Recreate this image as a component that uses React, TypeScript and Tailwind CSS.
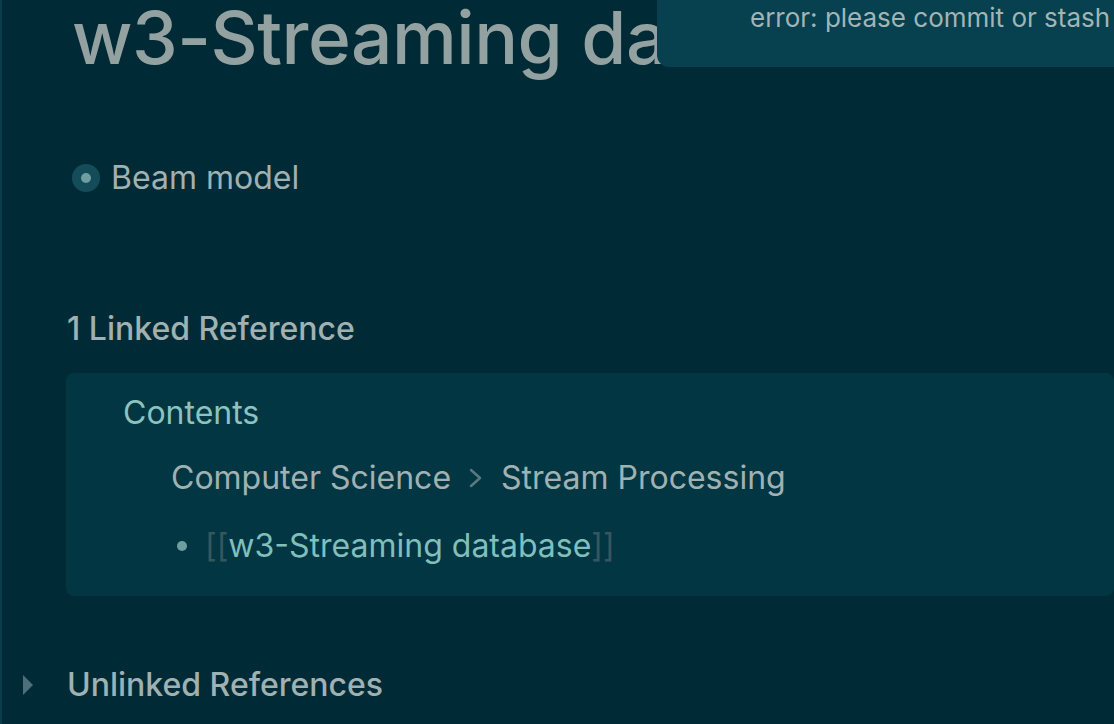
export default function App() {
  return (
    <div className="relative h-[724px] w-full overflow-hidden bg-[#002b36] border-l-2 border-[#0a3d4a] font-['Inter','Noto_Sans',sans-serif]">
      {/* toast */}
      <div className="absolute left-[655px] top-[-20px] h-[87px] w-[520px] rounded-[12px] bg-[#07404e] pl-[93px] pt-[18px] text-[26px] text-[#a2b4b6] whitespace-nowrap">
        error: please commit or stash them.
      </div>

      <div className="pl-[70px] pr-0">
        <h1 className="mt-[1px] whitespace-nowrap text-[73px] leading-none font-medium text-[#93a1a1] tracking-[-0.5px]">
          w3-Streaming database
        </h1>

        <div className="mt-[86px] flex h-[36px] items-center gap-[11px]">
          <span className="flex h-[28px] w-[28px] items-center justify-center rounded-full bg-[#144c59]">
            <span className="h-[10px] w-[10px] rounded-full bg-[#6f9ea0]" />
          </span>
          <span className="text-[32px] text-[#a0b1b2]">Beam model</span>
        </div>

        <div className="-ml-[5px] mt-[115px] flex h-[36px] items-center text-[32px] font-medium text-[#a0b1b2]">
          1 Linked Reference
        </div>

        <div className="-ml-[6px] mt-[26px] rounded-[8px] bg-[#033643] pl-[57px] pt-[22px] pb-[32px]">
          <div className="flex h-[36px] items-center text-[32px] text-[#8cc3bf]">Contents</div>
          <div className="mt-[29px] ml-[48px] flex h-[36px] items-center text-[32px] text-[#a0b1b2]">
            <span>Computer Science</span>
            <svg width="14" height="20" viewBox="0 0 14 20" className="mx-[18px] text-[#5b7980]">
              <path d="M2 2 L11 10 L2 18" fill="none" stroke="currentColor" strokeWidth="2.5" strokeLinecap="round" strokeLinejoin="round" />
            </svg>
            <span>Stream Processing</span>
          </div>
          <div className="mt-[32px] ml-[54px] flex h-[36px] items-center text-[32px]">
            <span className="h-[10px] w-[10px] rounded-full bg-[#6f9ea0]" />
            <span className="ml-[18px] text-[#37575f]">[[</span>
            <span className="text-[#7fbfbc]">w3-Streaming database</span>
            <span className="text-[#37575f]">]]</span>
          </div>
        </div>
      </div>

      <div className="mt-[71px] flex h-[36px] items-center pl-[20px]">
        <svg width="12" height="22" viewBox="0 0 12 22" className="text-[#4b7079]">
          <path d="M1 1 L11 11 L1 21 Z" fill="currentColor" />
        </svg>
        <span className="ml-[33px] text-[32px] font-medium text-[#a0b1b2]">Unlinked References</span>
      </div>
    </div>
  );
}
